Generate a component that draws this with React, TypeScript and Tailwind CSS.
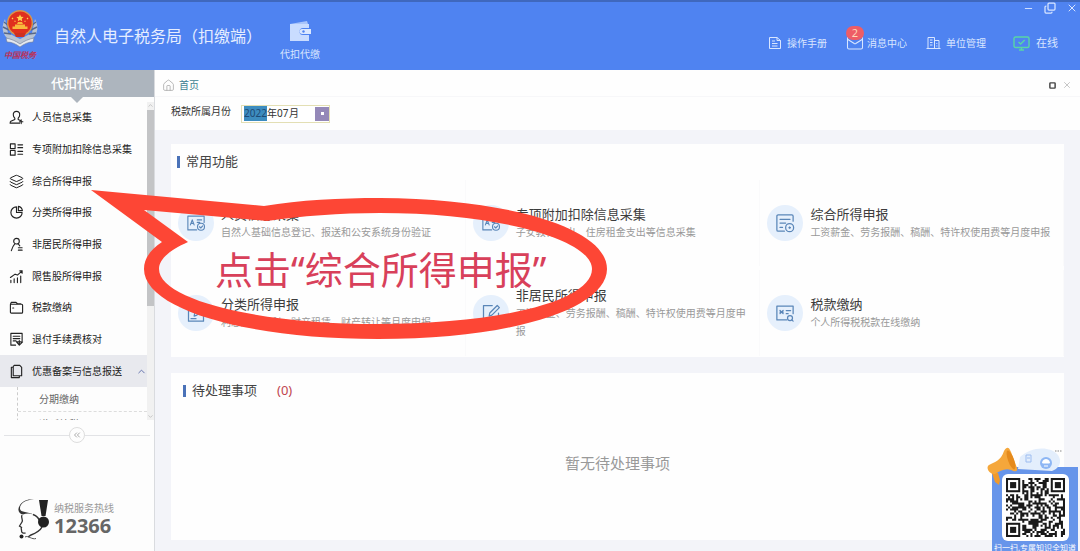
import React from 'react';
import {
  BookText,
  Building2,
  ChartPie,
  ChevronDown,
  ChevronUp,
  ChevronsLeft,
  Copy,
  House,
  Layers,
  Mail,
  Minus,
  Square,
  X,
} from 'lucide-react';

type IconProps = { children: React.ReactNode; size?: number; className?: string };

function LineIcon({ children, size = 15, className }: IconProps) {
  return (
    <svg
      width={size}
      height={size}
      viewBox="0 0 16 16"
      fill="none"
      stroke="currentColor"
      strokeWidth="1.2"
      strokeLinecap="round"
      strokeLinejoin="round"
      className={className}
      aria-hidden="true"
    >
      {children}
    </svg>
  );
}

const menu = [
  {
    label: '人员信息采集',
    icon: (
      <LineIcon>
        <path d="M8 1.5c2.4 0 3.6 1.6 3.4 3.8-.1 1.7-.8 2.6-1.6 3.4v1.4l2.2 1M8 1.5C5.6 1.5 4.4 3.1 4.600 5.300c.1 1.700.8 2.600 1.600 3.400v1.400L2 12c-.6.4-.8 1-.8 2h10M13 10.500v4M11.200 12.500h3.600" />
      </LineIcon>
    ),
  },
  {
    label: '专项附加扣除信息采集',
    icon: (
      <LineIcon>
        <path d="M1.500 2h5v5h-5zM1.500 9h5v5h-5zM9.500 3h5M9.500 6h5M9.500 10h5M9.500 13h5" />
      </LineIcon>
    ),
  },
  { label: '综合所得申报', icon: <Layers size={15} strokeWidth={1.6} /> },
  {
    label: '分类所得申报',
    icon: (
      <LineIcon>
        <path d="M8 2a6 6 0 1 0 6 6H8zM10 1.500A5.500 5.500 0 0 1 14.300 6H10z" />
      </LineIcon>
    ),
  },
  {
    label: '非居民所得申报',
    icon: (
      <LineIcon>
        <circle cx="8" cy="4.500" r="3" />
        <path d="M6 7.500C4.500 9 3.500 11 2.500 14.500M10 7.500l1.500 2M10 11.500h4M10 14h4" />
      </LineIcon>
    ),
  },
  {
    label: '限售股所得申报',
    icon: (
      <LineIcon>
        <path d="M2 14.500v-2.500M5.500 14.500v-4M9 14.500v-5M12.500 14.500v-7M1.500 9l5-3.500 2.500 1 5-4.500M11.500 2H14v2.500" />
      </LineIcon>
    ),
  },
  {
    label: '税款缴纳',
    icon: (
      <LineIcon>
        <path d="M1.500 4.500h12a1 1 0 0 1 1 1V13a1 1 0 0 1-1 1h-11a1 1 0 0 1-1-1zM1.500 4.500l1-2h5l1.500 1.500h3.500M4 8.500h1" />
      </LineIcon>
    ),
  },
  {
    label: '退付手续费核对',
    icon: (
      <LineIcon>
        <path d="M14 9V1.500H2V14h5M4.500 4.500h7M4.500 7h7M4.500 9.500h3M8 10.500l3 3.500 3.500-3.500zM11 9v4" />
      </LineIcon>
    ),
  },
];

function IdCheckIcon() {
  return (
    <LineIcon size={20}>
      <path d="M8.500 13.500h-7v-11h13v5M3.500 9.500 5 5.500l1.500 4M4 8.300h2M9 5.500h3.500M9 7.500h2" strokeWidth="0.900" />
      <circle cx="12" cy="11" r="2.800" strokeWidth="0.900" />
      <path d="m10.800 11 1 1 1.600-1.700" strokeWidth="0.900" />
    </LineIcon>
  );
}

function EditIcon() {
  return (
    <LineIcon size={20}>
      <path d="M9 2H2v12.500h12V8M6.500 10.500l.5-2.500 6-6 1.700 1.700-6 6zM4 12.500h4" strokeWidth="1" />
    </LineIcon>
  );
}

function FormGearIcon() {
  return (
    <LineIcon size={20}>
      <path d="M7.500 14.500H2.500a1 1 0 0 1-1-1v-11a1 1 0 0 1 1-1h11a1 1 0 0 1 1 1v4M4 5h8M4 8h4.500M4 11.500h2" strokeWidth="1" />
      <circle cx="11.700" cy="11.700" r="3.200" strokeWidth="1" />
      <circle cx="11.700" cy="11.700" r="0.700" fill="currentColor" strokeWidth="0.500" />
    </LineIcon>
  );
}

function PaySearchIcon() {
  return (
    <LineIcon size={20}>
      <path d="M9.500 13.500h-8v-11h13v6M4 6l2.500 2.500M6.500 6 4 8.500M4 7.300h2.500M9 6h3.500M9 8.500h1.500M13.500 13.500l1 1" strokeWidth="1" />
      <circle cx="12" cy="12" r="2" strokeWidth="1" />
    </LineIcon>
  );
}

const features = [
  { title: '人员信息采集', desc: '自然人基础信息登记、报送和公安系统身份验证', icon: <IdCheckIcon /> },
  { title: '专项附加扣除信息采集', desc: '子女教育支出、住房租金支出等信息采集', icon: <IdCheckIcon /> },
  { title: '综合所得申报', desc: '工资薪金、劳务报酬、稿酬、特许权使用费等月度申报', icon: <FormGearIcon /> },
  { title: '分类所得申报', desc: '利息股息红利、财产租赁、财产转让等月度申报', icon: <EditIcon /> },
  { title: '非居民所得申报', desc: '工资薪金、劳务报酬、稿酬、特许权使用费等月度申报', icon: <EditIcon /> },
  { title: '税款缴纳', desc: '个人所得税税款在线缴纳', icon: <PaySearchIcon /> },
];

function Emblem() {
  return (
    <svg width="40" height="42" viewBox="0 0 40 42" aria-hidden="true">
      <path d="M5 11C0 20 3 31 14 34l6 4 6-4c11-3 14-14 9-23l-3 14-12 6-12-6z" fill="#b9c3d2" />
      <path d="M4 14l5 4M3 19l6 3M4 25l7 1M36 14l-5 4M37 19l-6 3M36 25l-7 1" stroke="#58688a" strokeWidth="1.400" />
      <path d="M6 30c5 1 10 3 14 6 4-3 9-5 14-6l-1 4c-5 0-9 2-13 5-4-3-8-5-13-5z" fill="#e4e8ef" stroke="#6d7b96" strokeWidth="0.600" />
      <circle cx="20" cy="15" r="13" fill="#d9964a" />
      <circle cx="20" cy="15" r="11.600" fill="#e0301e" />
      <path d="M20 6.500l1.100 2.300 2.500.3-1.800 1.700.4 2.500-2.200-1.200-2.200 1.200.4-2.500-1.800-1.700 2.500-.3z" fill="#ffd34d" />
      <path d="M12.500 21h15v-2.500h-2.500V16.500h-10v2h-2.500zM17 16h6l-1-2h-4z" fill="#f9b93c" />
      <path d="M12 10l1 1M28 10l-1 1M14.500 13l1 .5M25.500 13l-1 .5" stroke="#ffd34d" strokeWidth="1.200" />
      <path d="M14 25h12l-2 4h-8z" fill="#cf2f20" />
    </svg>
  );
}

function Header() {
  return (
    <header className="flex h-[70px] shrink-0 items-start border-t-2 border-[#3f68bd] bg-[#4f83f1] text-[#d9e6ff]">
      <div className="flex w-10 flex-col items-center pt-1.5">
        <Emblem />
        <span className="font-serif text-[8px] leading-3 font-bold italic text-[#b8335c]">中国税务</span>
      </div>
      <h1 className="ml-3.5 pt-[22px] text-base leading-6 whitespace-nowrap text-[#e6eeff]">
        自然人电子税务局（扣缴端）
      </h1>
      <button className="ml-[18px] flex flex-col items-center gap-1 pt-[18px] text-[10px] leading-4">
        <svg width="24" height="22" viewBox="0 0 24 22" aria-hidden="true">
          <path d="M2 4l17-3 1 3H2z" fill="#a9c5fb" />
          <path d="M2 4h19v4h-6a3 3 0 0 0 0 7h6v6H2z" fill="#c9dcff" />
          <path d="M14 9h9v5h-9a2.500 2.500 0 0 1 0-5z" fill="#dbe8ff" />
          <circle cx="15.500" cy="11.500" r="1.200" fill="#4f83f1" />
        </svg>
        代扣代缴
      </button>
      <div className="ml-auto flex flex-col items-end">
        <div className="flex h-3 items-center gap-2.5 pr-0.5">
          <button aria-label="最小化"><Minus size={11} /></button>
          <button aria-label="还原"><Copy size={12} strokeWidth={2.5} className="-scale-x-100 rotate-180" /></button>
          <button aria-label="关闭"><X size={12} /></button>
        </div>
        <nav className="flex items-center gap-[19px] pt-5 pr-[22px] text-[10px] leading-4">
          <a href="#manual" className="flex items-center gap-[5px]">
            <svg width="14" height="14" viewBox="0 0 14 14" fill="none" stroke="currentColor" aria-hidden="true">
              <path d="M1.500 1.500h7.500l3.500 3v8h-11zM9 1.500v3h3.500M4 5h3M4 7.500h5.500M4 10h5.500" />
            </svg>
            操作手册
          </a>
          <a href="#messages" className="relative flex items-center gap-[3px]">
            <Mail size={18} strokeWidth={1.4} />
            消息中心
            <span className="absolute -top-2 left-0 flex h-3.5 w-[18px] items-center justify-center rounded-full bg-[#ee5d66] text-[11px] leading-3 text-[#ffd9b8]">
              2
            </span>
          </a>
          <a href="#company" className="flex items-center gap-[5px]">
            <svg width="15" height="14" viewBox="0 0 15 14" fill="none" stroke="currentColor" aria-hidden="true">
              <path d="M.5 12.500h14M2 12.500V1.500h6.500v11M8.500 4.500H13v8M4 4h2.500M4 6.500h2.500M4 9h2.500M10.800 7v1M10.800 9.500v1" />
            </svg>
            单位管理
          </a>
          <span className="ml-2 flex items-center gap-1.5 text-[11px]">
            <svg width="17" height="15" viewBox="0 0 17 15" fill="none" stroke="#58d6a5" strokeWidth="1.400" aria-hidden="true">
              <rect x="1" y="1" width="15" height="10.500" rx="1.500" />
              <path d="M5.500 6l2.200 2 4-4M6 14h5M8.500 11.500V14" />
            </svg>
            在线
          </span>
        </nav>
      </div>
    </header>
  );
}

function Hotline() {
  return (
    <div className="mt-auto flex items-center gap-1 pb-2.5 pl-[18px]">
      <svg width="32" height="42" viewBox="0 0 32 42" fill="none" aria-hidden="true">
        <path d="M16 1C9 0 2 4 2 9.500c0 4.500 9 3 13 6-4-1.500-7-1-10 0C1 15-1 11 1.500 7 4 2 10-.5 16 1z" fill="#333" />
        <path d="M4 16c-1.500 3 1.500 4.500 0 7L1.500 27l2 1.500c-1 1.500.5 2 0 3.500 0 2 2 2.500 4 2" stroke="#333" strokeWidth="1.300" />
        <path d="M15 15.500c4 1.500 6 4 7 7M24 28c-2 4-6 6-11 8l-3 2" stroke="#333" strokeWidth="1.500" />
        <path d="M21 1h9l-2.500 16h-4z" fill="#222" />
        <circle cx="25.500" cy="23" r="5.500" fill="#222" />
        <circle cx="3.500" cy="37.500" r="2" fill="#222" />
        <path d="M7 38c3-2 7 3 11 1.500" stroke="#555" />
      </svg>
      <div className="flex flex-col">
        <span className="text-[10px] leading-3 text-[#999]">纳税服务热线</span>
        <strong className="font-['Noto_Sans'] text-xl leading-6 font-bold text-[#666]">12366</strong>
      </div>
    </div>
  );
}

function Sidebar() {
  return (
    <aside className="flex w-[155px] shrink-0 flex-col border-r border-[#d9dbdf] bg-[#fdfdfd]">
      <div className="relative flex h-[27px] shrink-0 items-center justify-center bg-[#adb5be] text-[13px] font-medium text-white">
        代扣代缴
        <span className="absolute top-full h-0 w-0 border-x-[6px] border-t-[6px] border-x-transparent border-t-[#adb5be]" />
      </div>
      <div className="mt-[5px] flex h-[318px] shrink-0 overflow-hidden">
        <nav className="min-w-0 flex-1">
          <ul className="grid h-[285px] auto-rows-fr text-[10px] text-[#222]">
            {menu.map((item) => (
              <li key={item.label} className="flex">
                <a href="#menu" className="flex flex-1 items-center gap-2 pl-[9px] whitespace-nowrap">
                  <span className="flex w-[15px] justify-center">{item.icon}</span>
                  {item.label}
                </a>
              </li>
            ))}
            <li className="flex bg-[#e8e9ee]">
              <button className="flex flex-1 items-center gap-2 pl-[9px] whitespace-nowrap">
                <LineIcon>
                  <path d="M5.500 1.500h6l2 2v9h-9v-9a2 2 0 0 1 1-2zM4.500 3.500h-2v11h8.500v-2" />
                </LineIcon>
                优惠备案与信息报送
                <ChevronUp size={11} className="ml-auto text-[#5b6aa8]" />
              </button>
            </li>
          </ul>
          <ul className="ml-[17px] border-l border-dashed border-[#ccc] text-[10px] leading-4 text-[#666]">
            <li className="border-b border-dashed border-[#ddd] pt-1 pb-1 pl-[21px]">
              <a href="#instalment">分期缴纳</a>
            </li>
            <li className="pt-1 pl-[21px]">
              <a href="#deferred">递延纳税</a>
            </li>
          </ul>
        </nav>
        <div className="flex w-[7px] flex-col items-center bg-[#f1f1f1]">
          <ChevronUp size={7} className="text-[#aaa]" />
          <div className="mt-px h-[196px] w-full bg-[#c3c4c6]" />
          <ChevronDown size={7} className="mt-auto text-[#aaa]" />
        </div>
      </div>
      <div className="mt-[7px] flex shrink-0 items-center px-1">
        <span className="h-px flex-1 bg-[#e2e3e6]" />
        <button aria-label="收起" className="flex size-4 items-center justify-center rounded-full border border-[#ddd] text-[#999]">
          <ChevronsLeft size={10} />
        </button>
        <span className="h-px flex-1 bg-[#e2e3e6]" />
      </div>
      <Hotline />
    </aside>
  );
}

function Toolbar() {
  return (
    <div className="shrink-0 bg-[#fefefe]">
      <div className="flex h-[27px] items-center border-b border-[#f7f7f9] pt-1 pr-2 pl-[7px]">
        <a href="#home" className="flex items-center gap-1 text-[10px] text-[#3d7f92]">
          <House size={13} strokeWidth={1.5} className="text-[#aaa]" />
          首页
        </a>
        <button aria-label="最大化" className="ml-auto text-[#444]">
          <Square size={7} strokeWidth={5} />
        </button>
        <button aria-label="关闭标签" className="ml-1.5 text-[#bbb]">
          <X size={10} />
        </button>
      </div>
      <div className="flex h-[33px] items-center gap-2.5 pl-4 text-[10px] text-[#333]">
        <label htmlFor="year" className="pb-1">税款所属月份</label>
        <div className="flex h-[18px] items-center border border-[#e3dfb4] bg-white pl-0.5">
          <input id="year" defaultValue="2022" className="w-[23px] bg-[#3d8cbf] text-[#1d4a75] outline-none" />
          年
          <input aria-label="月" defaultValue="07" className="w-3 outline-none" />
          月
          <button aria-label="选择月份" className="ml-4 flex size-[14px] items-center justify-center bg-[#9488b8]">
            <span className="size-[3px] bg-white" />
          </button>
        </div>
      </div>
    </div>
  );
}

function Features() {
  return (
    <section className="h-[213px] shrink-0 bg-[#fefefe]">
      <h2 className="flex h-9 items-center gap-1.5 pl-1.5 text-[13px] text-[#444]">
        <span className="h-3 w-[3px] bg-[#4a72b8]" />
        常用功能
      </h2>
      <div className="grid grid-cols-[33fr_33fr_34fr] gap-y-1">
        {features.map((f) => (
          <a key={f.title} href="#feature" className="flex h-[86px] items-center gap-[7px] border-r border-[#fafafb] pr-2 pl-[7px]">
            <span className="flex size-9 shrink-0 items-center justify-center rounded-full bg-[#e6f0fc] text-[#5a86b8]">
              {f.icon}
            </span>
            <span className="flex flex-col">
              <span className="text-[13px] leading-[18px] text-[#3c3c3c]">{f.title}</span>
              <span className="text-[10px] leading-[18px] text-[#999]">{f.desc}</span>
            </span>
          </a>
        ))}
      </div>
    </section>
  );
}

function Pending() {
  return (
    <section className="flex flex-1 flex-col bg-[#fefefe]">
      <h2 className="flex h-9 items-center gap-1.5 pl-3 text-[13px] text-[#444]">
        <span className="h-3 w-[3px] bg-[#4a72b8]" />
        待处理事项
        <span className="ml-3.5 text-[#c0454f]">(0)</span>
      </h2>
      <p className="pt-[42px] text-center text-[15px] leading-6 text-[#999]">暂无待处理事项</p>
    </section>
  );
}

const QR_SIZE = 29;

function inFinder(x: number, y: number) {
  const far = QR_SIZE - 8;
  return (x < 8 && y < 8) || (x >= far && y < 8) || (x < 8 && y >= far);
}

function QrCode() {
  const cells: string[] = [];
  let seed = 12366;
  for (let y = 0; y < QR_SIZE; y++) {
    for (let x = 0; x < QR_SIZE; x++) {
      seed = (seed * 1103515245 + 12345) % 2147483648;
      if (!inFinder(x, y) && (seed >> 12) % 100 < 52) cells.push(`M${x} ${y}h1v1h-1z`);
    }
  }
  const finders = [
    [0, 0],
    [QR_SIZE - 7, 0],
    [0, QR_SIZE - 7],
  ];
  return (
    <svg width="59" height="59" viewBox={`0 0 ${QR_SIZE} ${QR_SIZE}`} fill="#1a1a1a" role="img" aria-label="二维码">
      <path d={cells.join('')} />
      {finders.map(([x, y]) => (
        <g key={`${x}-${y}`}>
          <rect x={x + 0.5} y={y + 0.5} width="6" height="6" fill="none" stroke="#1a1a1a" />
          <rect x={x + 2} y={y + 2} width="3" height="3" />
        </g>
      ))}
    </svg>
  );
}

function QrPanel() {
  return (
    <div className="absolute right-0.5 bottom-0 h-[84px] w-[86px] bg-[#6795ea] pt-[7px]">
      <div className="mx-auto flex size-[67px] items-center justify-center rounded-md bg-white">
        <QrCode />
      </div>
      <p className="h-[10px] overflow-hidden text-center text-[8px] leading-[14px] whitespace-nowrap text-white">
        扫一扫,专属知识全知道
      </p>
      <svg width="90" height="40" viewBox="0 0 90 40" className="absolute -top-5 -left-[6px]" aria-hidden="true">
        <path d="M34 10C44 0 64-2 72 8c5 8 0 14-6 16L32 22z" fill="#e3eefc" />
        <path d="M40 8h5v7h-5zM41 11h3" stroke="#9cbcf0" fill="none" />
        <circle cx="60" cy="16" r="6" fill="#8db6f4" />
        <path d="M56.500 16a3.500 3.500 0 0 1 7 0zM58 19h4" fill="#fff" stroke="#fff" />
        <path d="M69 4h7" stroke="#888" strokeDasharray="1.500 1" />
        <path d="M6 26l3 9 4 3 1-5-2-7z" fill="#f09a2c" />
        <path d="M3 18c5-3 12-4 15-14 3-5 5-4 7 1l6 16c1 4-2 4-6 2-6-2-11 1-16 4-5 1-10-6-6-9z" fill="#f5a73b" />
        <ellipse cx="25" cy="13" rx="3" ry="10" transform="rotate(-20 25 13)" fill="#e58a1c" />
      </svg>
    </div>
  );
}

function Callout() {
  return (
    <div className="pointer-events-none absolute top-[188px] left-[90px] h-[152px] w-[520px]">
      <svg width="520" height="152" viewBox="90 188 520 152" className="absolute inset-0" aria-hidden="true">
        <path
          fill="#fd4635"
          fillRule="evenodd"
          d="M91 190 L264 206 C300 200 340 198 380 198 C510 199 607 228 607 269 C607 308 515 339 378 339 C245 339 144 309 144 269 C144 259 150 250 162 242 Z
             M144 210 L188 242 C170 250 159 259 159 269 C159 299 255 324 378 324 C500 324 592 301 592 269 C592 240 500 213 380 213 C340 213 300 216 267 221 Z"
        />
      </svg>
      <p className="absolute top-[54px] left-[125px] text-[38px] leading-[54px] whitespace-nowrap text-[#d8405a]">
        点击“综合所得申报”
      </p>
    </div>
  );
}

export default function App() {
  return (
    <div
      lang="zh-CN"
      className="relative flex h-screen flex-col overflow-hidden bg-[#f3f4f9] font-['Noto_Sans','Noto_Sans_CJK_SC',sans-serif]"
    >
      <Header />
      <div className="flex min-h-0 flex-1">
        <Sidebar />
        <main className="flex min-w-0 flex-1 flex-col">
          <Toolbar />
          <div className="flex min-h-0 flex-1 flex-col gap-4 pt-3.5 pr-4 pb-[11px] pl-4">
            <Features />
            <Pending />
          </div>
        </main>
      </div>
      <QrPanel />
      <Callout />
    </div>
  );
}
